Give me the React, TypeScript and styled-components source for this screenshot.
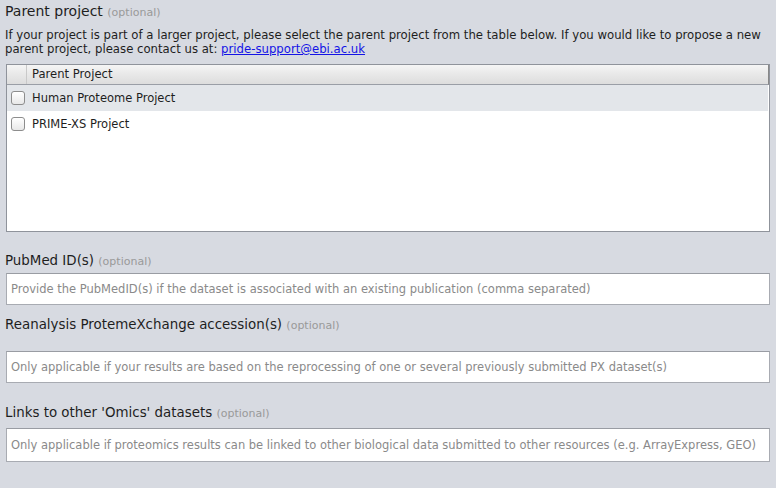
import React from "react";
import styled, { createGlobalStyle } from "styled-components";

const PROJECTS = ["Human Proteome Project", "PRIME-XS Project"];

const FIELDS = [
  {
    id: "pubmed",
    title: "PubMed ID(s)",
    hint: "Provide the PubMedID(s) if the dataset is associated with an existing publication (comma separated)",
    top: 20,
    gap: 2,
    height: 32,
  },
  {
    id: "reanalysis",
    title: "Reanalysis ProtemeXchange accession(s)",
    hint: "Only applicable if your results are based on the reprocessing of one or several previously submitted PX dataset(s)",
    top: 11,
    gap: 16,
    height: 32,
  },
  {
    id: "omics",
    title: "Links to other 'Omics' datasets",
    hint: "Only applicable if proteomics results can be linked to other biological data submitted to other resources (e.g. ArrayExpress, GEO)",
    top: 21,
    gap: 5,
    height: 34,
  },
];

const App = () => {
  return (
    <>
      <GlobalStyle />
      <Page>
        <Section>
          <Title>
            Parent project <Optional>(optional)</Optional>
          </Title>
          <Intro>
            If your project is part of a larger project, please select the
            parent project from the table below. If you would like to propose
            a new parent project, please contact us at:{" "}
            <MailLink href="#">pride-support@ebi.ac.uk</MailLink>
          </Intro>
          <Table>
            <HeaderRow>
              <CheckCell />
              <HeaderCell>Parent Project</HeaderCell>
            </HeaderRow>
            {PROJECTS.map((name, i) => (
              <Row key={name} $striped={i % 2 === 0}>
                <CheckCell>
                  <Check />
                </CheckCell>
                <Cell>{name}</Cell>
              </Row>
            ))}
          </Table>
        </Section>

        {FIELDS.map((f) => (
          <Field key={f.id} $top={f.top} $gap={f.gap}>
            <Title $small>
              {f.title} <Optional $small>(optional)</Optional>
            </Title>
            <Input placeholder={f.hint} $height={f.height} />
          </Field>
        ))}
      </Page>
    </>
  );
};

const GlobalStyle = createGlobalStyle`
  html, body {
    margin: 0;
    padding: 0;
    background: #d7dae1;
  }
  * {
    box-sizing: border-box;
  }
`;

const Page = styled.main`
  width: 776px;
  height: 488px;
  padding: 2px 6px 0 6px;
  font-family: "DejaVu Sans", "Liberation Sans", sans-serif;
  color: #1e1e1e;
  display: flex;
  flex-direction: column;
`;

const Section = styled.section`
  display: flex;
  flex-direction: column;
`;

const Title = styled.h2<{ $small?: boolean }>`
  margin: 0 0 0 -1px;
  font-weight: normal;
  font-size: ${({ $small }) => ($small ? "13.4px" : "14px")};
  line-height: 18px;
`;

const Optional = styled.span<{ $small?: boolean }>`
  color: #999;
  font-size: 11px;
`;

const Intro = styled.p`
  margin: 6px 0 0 -1px;
  font-size: 11.7px;
  line-height: 14px;
`;

const MailLink = styled.a`
  color: #1414e6;
  text-decoration: underline;
`;

const Table = styled.div`
  margin-top: 8px;
  width: 764px;
  height: 168px;
  background: #fff;
  border: 1px solid #8f939b;
  display: flex;
  flex-direction: column;
`;

const HeaderRow = styled.div`
  display: flex;
  height: 20px;
  background: linear-gradient(#f5f5f5, #e8e8e8 50%, #dddddd);
  border-bottom: 1px solid #9a9ea6;
  border-right: 1px solid #888;
`;

const CheckCell = styled.div`
  width: 20px;
  flex: none;
  display: flex;
  align-items: center;
  justify-content: center;
  border-right: 1px solid #c9c9c9;
`;

const HeaderCell = styled.div`
  padding-left: 5px;
  font-size: 11.6px;
  line-height: 19px;
`;

const Row = styled.div<{ $striped: boolean }>`
  display: flex;
  height: 26px;
  background: ${({ $striped }) => ($striped ? "#e3e6ea" : "#fff")};
  margin-right: 1px;

  ${CheckCell} {
    border-right: none;
    padding-left: 1px;
  }
`;

const Cell = styled.div`
  padding-left: 5px;
  font-size: 11.5px;
  line-height: 26px;
`;

const Check = styled.span`
  display: block;
  width: 14px;
  height: 14px;
  border: 1px solid #8d8d8d;
  border-radius: 3px;
  background: linear-gradient(#ffffff, #e8e8e8);
  box-shadow: inset 0 1px 0 #fff;
`;

const Field = styled.section<{ $top: number; $gap: number }>`
  margin-top: ${({ $top }) => $top}px;
  display: flex;
  flex-direction: column;
  gap: ${({ $gap }) => $gap}px;
`;

const Input = styled.input<{ $height: number }>`
  width: 764px;
  height: ${({ $height }) => $height}px;
  border: 1px solid #a8abb2;
  border-top-color: #999ca3;
  background: #fff;
  padding: 0 4px;
  font-family: "DejaVu Sans", "Liberation Sans", sans-serif;
  font-size: 11.5px;
  outline: none;

  &::placeholder {
    color: #8a8a8a;
  }
`;

export default App;
